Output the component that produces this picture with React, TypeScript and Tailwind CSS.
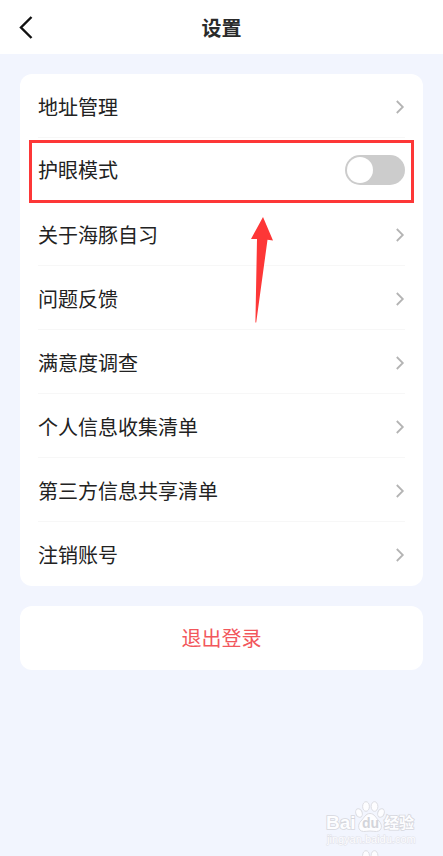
import { useState } from 'react';

const FONT = "font-['Noto_Sans_CJK_SC',sans-serif]";

type Item = {
    label: string;
    type: 'link' | 'switch';
};

const items: Item[] = [
    { label: '地址管理', type: 'link' },
    { label: '护眼模式', type: 'switch' },
    { label: '关于海豚自习', type: 'link' },
    { label: '问题反馈', type: 'link' },
    { label: '满意度调查', type: 'link' },
    { label: '个人信息收集清单', type: 'link' },
    { label: '第三方信息共享清单', type: 'link' },
    { label: '注销账号', type: 'link' },
];

function Chevron() {
    return (
        <svg width="10" height="14" viewBox="0 0 10 14" fill="none" stroke="#b4b4b4" strokeWidth="1.8" aria-hidden="true">
            <path d="M1.800 1 7.800 7 1.800 13" />
        </svg>
    );
}

function Pointer() {
    return (
        <svg className="absolute left-[213px] top-[79px] z-10 pointer-events-none" width="24" height="106" viewBox="0 0 24 106" aria-hidden="true">
            <path d="M12 0 22 23.5 16.5 22.8 5.2 105.5H4.4L6 22H0Z" fill="#fd3737" />
        </svg>
    );
}

function SwitchRow({ label }: { label: string }) {
    const [on, setOn] = useState(false);

    return (
        <li className="relative h-16">
            <label className="flex h-full items-center justify-between cursor-pointer">
                <span>{label}</span>
                <span className="relative flex h-[30px] w-[60px]">
                    <input
                        type="checkbox"
                        role="switch"
                        checked={on}
                        onChange={(e) => setOn(e.target.checked)}
                        className="peer h-full w-full appearance-none rounded-full bg-[#cccccc] checked:bg-blue-500 cursor-pointer"
                    />
                    <span className="absolute left-0.5 top-0.5 size-[26px] rounded-full bg-white pointer-events-none peer-checked:left-8" />
                </span>
            </label>

            {/* Highlight frame and arrow */}
            <div className="absolute -left-[9px] -right-[9px] top-0.5 h-[63px] border-3 border-[#fd3737] pointer-events-none" />
            <Pointer />
        </li>
    );
}

function Paw() {
    return (
        <>
            <ellipse cx="49" cy="23" rx="3.2" ry="4.4" transform="rotate(-18 49 23)" />
            <ellipse cx="56" cy="16.5" rx="3.4" ry="4.8" />
            <ellipse cx="64.5" cy="16.5" rx="3.4" ry="4.8" />
            <ellipse cx="71" cy="23" rx="3.2" ry="4.4" transform="rotate(18 71 23)" />
            <path d="M60 23.5c4.500 0 6 4.500 9 7.500 3.500 3.500 3.500 10-2.500 10.500-2.500.2-4-.5-6.500-.5s-4 .7-6.500.5c-6-.5-6-7-2.500-10.500 3-3 4.500-7.500 9-7.500Z" />
        </>
    );
}

function Watermark() {
    return (
        <svg className="absolute bottom-0 right-0 pointer-events-none" width="133" height="66" viewBox="0 0 133 66">
            <g fill="#fdfdff" stroke="#dcdde3" strokeWidth="1">
                <Paw />
                <g transform="translate(0 49)">
                    <Paw />
                </g>
            </g>
            <g fill="#fdfdff" stroke="#d6d7dd" strokeWidth="1.6" paintOrder="stroke" fontWeight="700">
                <text x="16" y="39" fontSize="19" fontFamily="'Liberation Sans', sans-serif">Bai</text>
                <text x="74" y="38" fontSize="15" fontFamily="'Noto Sans CJK SC', sans-serif">经验</text>
            </g>
            <text x="52" y="38" fontSize="14" fontWeight="700" fill="#d3d4da" fontFamily="'Liberation Sans', sans-serif">du</text>
            <text x="17" y="53" fontSize="11" fill="#fdfdff" stroke="#e0e1e8" strokeWidth="1" paintOrder="stroke" fontFamily="'Liberation Sans', sans-serif">
                jingyan.baidu.com
            </text>
        </svg>
    );
}

export default function App() {
    return (
        <div className={`relative min-h-screen w-full overflow-hidden bg-[#f2f5fe] text-xl text-[#222222] ${FONT}`}>
            <header className="grid h-[54px] grid-cols-[1fr_auto_1fr] items-center bg-white px-4">
                <button type="button" aria-label="返回" className="flex size-6 items-center cursor-pointer">
                    <svg width="20" height="24" viewBox="0 0 20 24" fill="none" stroke="#111111" strokeWidth="2.4" aria-hidden="true">
                        <path d="M15.500 2 5 12.500l10.500 10.500" />
                    </svg>
                </button>
                <h1 className="pt-0.5 font-bold text-[#2a2a2a]">设置</h1>
            </header>

            <main className="flex flex-col gap-5 p-5">
                <ul className="rounded-xl bg-white px-[18px]">
                    {items.map((item) =>
                        item.type === 'switch' ? (
                            <SwitchRow key={item.label} label={item.label} />
                        ) : (
                            <li key={item.label} className="h-16 border-b border-[#f7f7f7] last:border-b-0">
                                <a href="#" className="flex h-full items-center justify-between pt-0.5">
                                    <span>{item.label}</span>
                                    <Chevron />
                                </a>
                            </li>
                        )
                    )}
                </ul>

                <button type="button" className="h-16 rounded-xl bg-white text-[#f2575c] cursor-pointer">
                    退出登录
                </button>
            </main>

            <Watermark />
        </div>
    );
}
